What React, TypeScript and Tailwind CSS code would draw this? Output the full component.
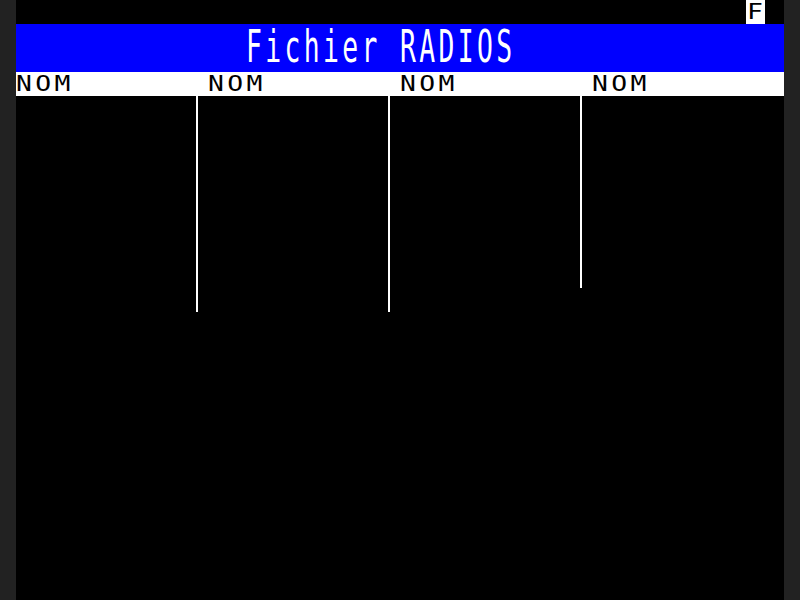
const cols = ["NOM", "NOM", "NOM", "NOM"];
const lineHeights = ["h-[216px]", "h-[216px]", "h-[192px]", ""];

export default function App() {
  return (
    <div className="w-[800px] h-[600px] bg-[#222222] flex justify-center overflow-hidden">
      <div
        className="w-[768px] h-[600px] bg-black flex flex-col"
        style={{ fontFamily: '"DejaVu Sans Mono", "Liberation Mono", monospace' }}
      >
        {/* Status row */}
        <div className="h-[24px] flex justify-end">
          <div className="w-[19.2px] h-[24px] bg-white text-black text-[22px] leading-[24px] pl-[1px]">
            <span className="inline-block scale-x-[1.2] origin-left">F</span>
          </div>
          <div className="w-[19.2px] h-[24px]"></div>
        </div>

        {/* Double-height title */}
        <div className="h-[48px] bg-[#0000ff] flex items-center">
          <div className="ml-[230.4px] text-white text-[22px] leading-none tracking-[2.8px] scale-x-[1.2] scale-y-200 origin-left whitespace-pre">
            Fichier RADIOS
          </div>
        </div>

        {/* Column headers */}
        <div className="h-[24px] bg-white flex">
          {cols.map((c, i) => (
            <div key={i} className="w-[192px] text-black text-[22px] leading-[24px]">
              <span className="inline-block tracking-[2.8px] scale-x-[1.2] origin-left">{c}</span>
            </div>
          ))}
        </div>

        {/* Column separators */}
        <div className="flex">
          {lineHeights.map((h, i) => (
            <div key={i} className="w-[192px]">
              {h && <div className={`ml-[180px] w-[2px] bg-white ${h}`}></div>}
            </div>
          ))}
        </div>
      </div>
    </div>
  );
}
